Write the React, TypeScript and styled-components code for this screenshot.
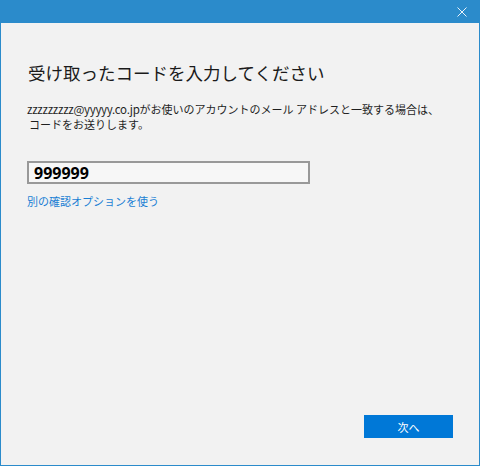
import React from 'react';
import styled, { createGlobalStyle } from 'styled-components';

const GlobalStyle = createGlobalStyle`
  html, body {
    margin: 0;
    padding: 0;
    background: #f2f2f2;
  }
  * {
    box-sizing: border-box;
  }
`;

const Window = styled.div`
  width: 480px;
  height: 466px;
  border: 1px solid #2b8bcb;
  border-top: none;
  background: #f2f2f2;
  display: flex;
  flex-direction: column;
  font-family: "Noto Sans CJK JP", "Noto Sans", sans-serif;
  color: #1f1f1f;
`;

const TitleBar = styled.div`
  height: 23px;
  margin: 0 -1px;
  background: #2b8bcb;
  display: flex;
  align-items: center;
  justify-content: flex-end;
  padding-right: 13px;
`;

const CloseButton = styled.button`
  border: none;
  background: transparent;
  padding: 0;
  width: 10px;
  height: 10px;
  display: flex;
  cursor: pointer;
`;

const Main = styled.div`
  flex: 1;
  display: flex;
  flex-direction: column;
  padding: 38px 26px 0 26px;
`;

const Title = styled.h1`
  margin: 0 0 0 1px;
  font-size: 17.5px;
  font-weight: 400;
  line-height: 24px;
  color: #1a1a1a;
`;

const Description = styled.p`
  margin: 17px 0 0 0;
  font-size: 11px;
  line-height: 15px;
  color: #1f1f1f;
`;

const Email = styled.span`
  font-size: 11.5px;
  letter-spacing: -0.3px;
`;

const Indent = styled.span`
  padding-left: 2px;
`;

const CodeInput = styled.input`
  margin-top: 29px;
  width: 283px;
  height: 23px;
  border: 2px solid #999;
  background: #f7f7f7;
  padding: 0 5px;
  font-family: "Noto Sans", "Open Sans", sans-serif;
  font-weight: 700;
  font-size: 16px;
  color: #000;
  outline: none;
`;

const AltLink = styled.a`
  margin-top: 9px;
  font-size: 11px;
  line-height: 16px;
  color: #1a7fd4;
  text-decoration: none;
  cursor: pointer;
  align-self: flex-start;
`;

const Footer = styled.div`
  display: flex;
  justify-content: flex-end;
  padding: 0 26px 27px 0;
`;

const PrimaryButton = styled.button`
  width: 89px;
  height: 23px;
  border: none;
  background: #0078d7;
  color: #fff;
  font-family: "Noto Sans CJK JP", sans-serif;
  font-size: 11px;
  cursor: pointer;
  padding: 0;
`;

const App: React.FC = () => {
  return (
    <>
      <GlobalStyle />
      <Window>
        <TitleBar>
          <CloseButton aria-label="閉じる">
            <svg width="10" height="10" viewBox="0 0 10 10">
              <path d="M0.5 0.5 L9.5 9.5 M9.5 0.5 L0.5 9.5" stroke="#e8f2fa" strokeWidth="1" />
            </svg>
          </CloseButton>
        </TitleBar>
        <Main>
          <Title>受け取ったコードを入力してください</Title>
          <Description>
            <Email>zzzzzzzzz@yyyyy.co.jp</Email>がお使いのアカウントのメール アドレスと一致する場合は、
            <br />
            <Indent>コードをお送りします。</Indent>
          </Description>
          <CodeInput defaultValue="999999" />
          <AltLink>別の確認オプションを使う</AltLink>
        </Main>
        <Footer>
          <PrimaryButton>次へ</PrimaryButton>
        </Footer>
      </Window>
    </>
  );
};

export default App;
